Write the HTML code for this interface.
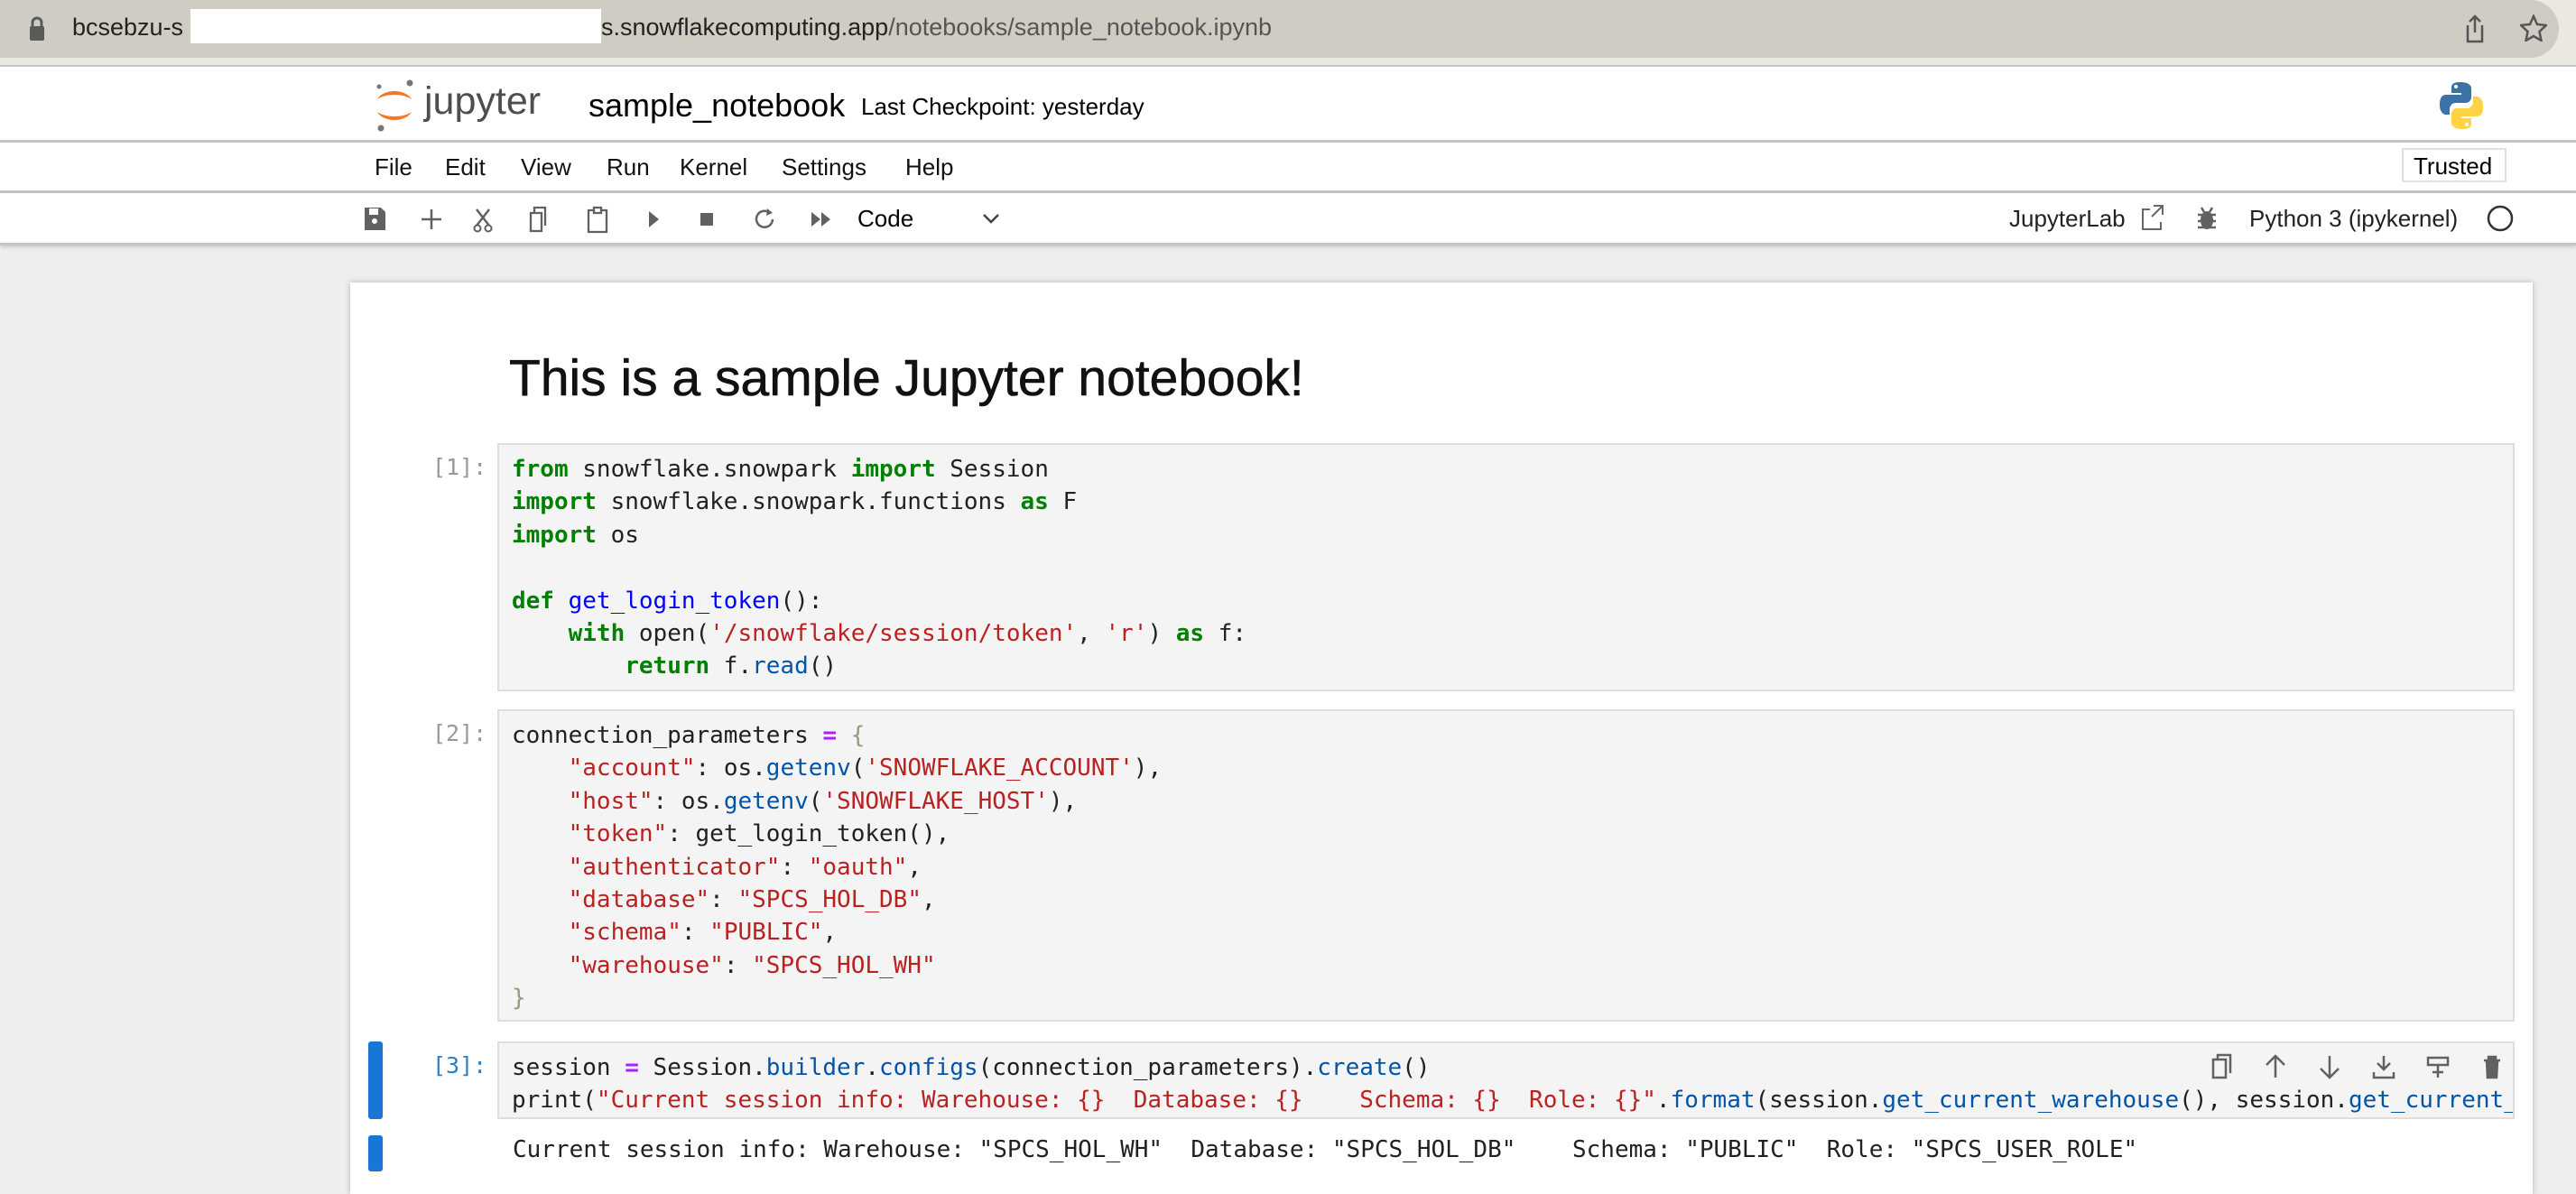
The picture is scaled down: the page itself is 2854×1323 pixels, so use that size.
<!DOCTYPE html>
<html><head><meta charset="utf-8"><style>
*{margin:0;padding:0;box-sizing:border-box}
body{width:2854px;height:1310px;overflow:hidden;background:#eeeeee;font-family:"Liberation Sans",sans-serif;position:relative}
.a{position:absolute;white-space:pre}
.chrome{position:absolute;left:0;top:0;width:2854px;height:72px;background:#ebe7e1}
.url{position:absolute;left:0;top:0;width:2835px;height:64px;background:#cfccc4;border-radius:0 32px 32px 0}
.bar{position:absolute;left:0;width:2854px;background:#fff;border-bottom:3px solid #c4c4c4}
.mono{font-family:"DejaVu Sans Mono","Liberation Mono",monospace;font-size:26px;line-height:36.4px;color:#212121;white-space:pre}
.box{position:absolute;left:551px;width:2235px;background:#f4f4f4;border:2px solid #dedede;padding:9px 0 0 14px;overflow:hidden}
.k{color:#008000;font-weight:bold}.s{color:#ba2121}.b{color:#0055aa}.o{color:#aa22ff;font-weight:bold}.br{color:#999977}
.pr{position:absolute;font-family:"DejaVu Sans Mono","Liberation Mono",monospace;font-size:25px;color:#999}
.menu{font-size:26px;color:#111;top:170px}
</style></head><body>
<div class="chrome"><div class="url"></div></div>
<svg class="a" style="left:32px;top:18px" width="18" height="28"><rect x="1" y="11" width="16" height="16" rx="2" fill="#5a5a5a"/><path d="M4 12V7a5 5 0 0110 0v5" stroke="#5a5a5a" stroke-width="3" fill="none"/></svg>
<div class="a" style="left:80px;top:15px;font-size:27px;color:#222">bcsebzu-s</div>
<div class="a" style="left:211px;top:10px;width:455px;height:38px;background:#fff"></div>
<div class="a" style="left:666px;top:15px;font-size:27px;color:#222">s.snowflakecomputing.app<span style="color:#555">/notebooks/sample_notebook.ipynb</span></div>
<svg class="a" style="left:2730px;top:16px" width="24" height="32"><path d="M12 2v18M6 8l6-6 6 6M4 12v18h16V12" stroke="#555" stroke-width="2.5" fill="none"/></svg>
<svg class="a" style="left:2792px;top:16px" width="30" height="30"><path d="M15 2l4 9 10 1-7.5 7 2 10L15 24l-8.5 5 2-10L1 12l10-1z" stroke="#555" stroke-width="2.5" fill="none"/></svg>

<div class="bar" style="top:72px;height:86px;border-top:2px solid #c4c4c4"></div>
<svg class="a" style="left:412px;top:86px" width="50" height="62"><path d="M6 24a20 13 0 0138 0a22 10 0 00-38 0z" fill="#f37726"/><path d="M6 38a20 13 0 0038 0a22 10 0 01-38 0z" fill="#f37726"/><circle cx="42" cy="6" r="3.5" fill="#767677"/><circle cx="8" cy="10" r="2.5" fill="#767677"/><circle cx="10" cy="56" r="3.5" fill="#767677"/></svg>
<div class="a" style="left:470px;top:88px;font-size:43px;color:#4e4e4e">jupyter</div>
<div class="a" style="left:652px;top:96px;font-size:36px;color:#000">sample_notebook</div>
<div class="a" style="left:954px;top:103px;font-size:26px;color:#000">Last Checkpoint: yesterday</div>
<svg class="a" style="left:2702px;top:90px" width="50" height="54" viewBox="0 0 50 54"><path d="M24 1c-10 0-10 4-10 7v5h11v2H8c-5 0-7 4-7 11s3 11 7 11h4v-6c0-4 3-7 7-7h11c3 0 6-3 6-6V8c0-4-4-7-12-7z" fill="#3b73a8"/><path d="M26 53c10 0 10-4 10-7v-5H25v-2h17c5 0 7-4 7-11s-3-11-7-11h-4v6c0 4-3 7-7 7H20c-3 0-6 3-6 6v10c0 4 4 7 12 7z" fill="#ffd343"/><circle cx="19" cy="6" r="2" fill="#fff"/><circle cx="31" cy="48" r="2" fill="#fff"/></svg>

<div class="bar" style="top:158px;height:56px"></div>
<div class="a menu" style="left:415px">File</div><div class="a menu" style="left:493px">Edit</div><div class="a menu" style="left:577px">View</div><div class="a menu" style="left:672px">Run</div><div class="a menu" style="left:753px">Kernel</div><div class="a menu" style="left:866px">Settings</div><div class="a menu" style="left:1003px">Help</div>
<div class="a" style="left:2661px;top:164px;width:116px;height:38px;border:2px solid #e0e0e0;font-size:26px;padding:3px 0 0 11px;color:#000">Trusted</div>

<div class="bar" style="top:214px;height:58px;box-shadow:0 2px 4px rgba(0,0,0,.15)"></div>
<svg class="a" style="left:402px;top:226px" width="720" height="34" fill="#616161" stroke="#616161">
<path d="M2 4h18l5 5v20H2z M7 5h10v7H7z M10 19a3 3 0 106 0a3 3 0 10-6 0" stroke="none" fill-rule="evenodd"/>
<path d="M76 6v22M65 17h22" stroke-width="2.5" fill="none"/>
<path d="M126 6l14 18M140 6l-14 18" stroke-width="2.5" fill="none"/><circle cx="127" cy="27" r="3.5" fill="none" stroke-width="2"/><circle cx="139" cy="27" r="3.5" fill="none" stroke-width="2"/>
<path d="M186 10h12v20h-12zM190 10V4h12v20" stroke-width="2.3" fill="none"/>
<path d="M256 7h-6v24h20V7h-6M256 4h8v6h-8z" stroke-width="2.3" fill="none"/>
<path d="M317 8l11 9-11 9z" stroke="none"/>
<rect x="374" y="10" width="14" height="14" stroke="none"/>
<path d="M451 10a9 9 0 10 3 7" stroke-width="2.5" fill="none"/><path d="M448 5l6 5-7 3z" stroke="none"/>
<path d="M497 9l10 8-10 8zM508 9l10 8-10 8z" stroke="none"/>
</svg>
<div class="a" style="left:950px;top:227px;font-size:26px;color:#000">Code</div>
<svg class="a" style="left:1088px;top:236px" width="20" height="14"><path d="M2 2l8 8 8-8" stroke="#444" stroke-width="2.5" fill="none"/></svg>
<div class="a" style="left:2226px;top:227px;font-size:26px;color:#222">JupyterLab</div>
<svg class="a" style="left:2372px;top:226px" width="26" height="30"><path d="M10 6H2v22h20v-8M14 2h10v10M24 2L12 14" stroke="#666" stroke-width="2" fill="none"/></svg>
<svg class="a" style="left:2434px;top:228px" width="22" height="28"><ellipse cx="11" cy="16" rx="7" ry="10" fill="#616161"/><path d="M1 10h20M1 17h20M1 24h20M5 2l3 5M17 2l-3 5" stroke="#616161" stroke-width="2.5"/></svg>
<div class="a" style="left:2492px;top:227px;font-size:26px;color:#222">Python 3 (ipykernel)</div>
<svg class="a" style="left:2754px;top:226px" width="32" height="32"><circle cx="16" cy="16" r="13" stroke="#333" stroke-width="2.5" fill="none"/></svg>

<div class="a" style="left:388px;top:313px;width:2418px;height:1010px;background:#fff;box-shadow:0 0 6px rgba(0,0,0,.25)"></div>
<div class="a" style="left:564px;top:386px;font-size:57px;color:#111;-webkit-text-stroke:0.6px #111">This is a sample Jupyter notebook!</div>

<div class="pr" style="left:479px;top:503px">[1]:</div>
<div class="box mono" style="top:491px;height:275px"><span class="k">from</span> snowflake.snowpark <span class="k">import</span> Session
<span class="k">import</span> snowflake.snowpark.functions <span class="k">as</span> F
<span class="k">import</span> os

<span class="k">def</span> <span style="color:#0000ff">get_login_token</span>():
    <span class="k">with</span> open(<span class="s">'/snowflake/session/token'</span>, <span class="s">'r'</span>) <span class="k">as</span> f:
        <span class="k">return</span> f.<span class="b">read</span>()</div>

<div class="pr" style="left:479px;top:798px">[2]:</div>
<div class="box mono" style="top:786px;height:346px">connection_parameters <span class="o">=</span> <span class="br">{</span>
    <span class="s">"account"</span>: os.<span class="b">getenv</span>(<span class="s">'SNOWFLAKE_ACCOUNT'</span>),
    <span class="s">"host"</span>: os.<span class="b">getenv</span>(<span class="s">'SNOWFLAKE_HOST'</span>),
    <span class="s">"token"</span>: get_login_token(),
    <span class="s">"authenticator"</span>: <span class="s">"oauth"</span>,
    <span class="s">"database"</span>: <span class="s">"SPCS_HOL_DB"</span>,
    <span class="s">"schema"</span>: <span class="s">"PUBLIC"</span>,
    <span class="s">"warehouse"</span>: <span class="s">"SPCS_HOL_WH"</span>
<span class="br">}</span></div>

<div class="a" style="left:408px;top:1154px;width:16px;height:86px;background:#1976d2;border-radius:3px"></div>
<div class="pr" style="left:479px;top:1166px;color:#307fc1">[3]:</div>
<div class="box mono" style="top:1154px;height:86px">session <span class="o">=</span> Session.<span class="b">builder</span>.<span class="b">configs</span>(connection_parameters).<span class="b">create</span>()
print(<span class="s">"Current session info: Warehouse: {}  Database: {}    Schema: {}  Role: {}"</span>.<span class="b">format</span>(session.<span class="b">get_current_warehouse</span>(), session.<span class="b">get_current_database</span>()</div>
<svg class="a" style="left:2446px;top:1166px" width="340" height="32" fill="none" stroke="#616161" stroke-width="2.5">
<path d="M6 8h14v20H6zM11 8V3h14v20"/>
<path d="M75 28V5M65 14l10-10 10 10"/>
<path d="M135 4v23M125 18l10 10 10-10"/>
<path d="M195 4v14M188 12l7 7 7-7M184 22v6h22v-6"/>
<path d="M244 6h22v8h-22zM255 14v14M249 22h12"/>
<path d="M306 9h18M311 9V5h8v4M309 9l1 19h10l1-19" fill="#616161"/>
</svg>
<div class="a" style="left:408px;top:1258px;width:16px;height:40px;background:#1976d2;border-radius:3px"></div>
<div class="a mono" style="left:568px;top:1256px">Current session info: Warehouse: "SPCS_HOL_WH"  Database: "SPCS_HOL_DB"    Schema: "PUBLIC"  Role: "SPCS_USER_ROLE"</div>
</body></html>
